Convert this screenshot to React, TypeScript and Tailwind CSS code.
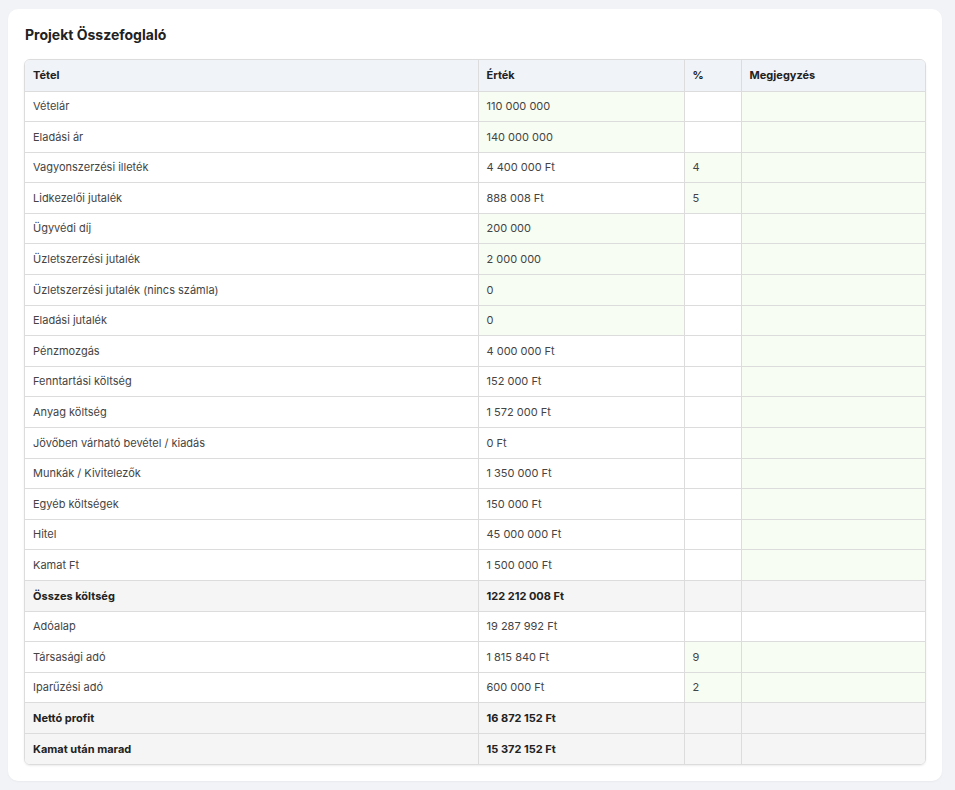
const rows: [string, string, string, boolean, boolean, boolean, boolean][] = [
  // label, value, pct, valGreen, pctGreen, noteGreen, bold
  ["Vételár", "110 000 000", "", true, false, true, false],
  ["Eladási ár", "140 000 000", "", true, false, true, false],
  ["Vagyonszerzési illeték", "4 400 000 Ft", "4", false, true, true, false],
  ["Lidkezelői jutalék", "888 008 Ft", "5", false, true, true, false],
  ["Ügyvédi díj", "200 000", "", true, false, true, false],
  ["Üzletszerzési jutalék", "2 000 000", "", true, false, true, false],
  ["Üzletszerzési jutalék (nincs számla)", "0", "", true, false, true, false],
  ["Eladási jutalék", "0", "", true, false, true, false],
  ["Pénzmozgás", "4 000 000 Ft", "", false, false, true, false],
  ["Fenntartási költség", "152 000 Ft", "", false, false, true, false],
  ["Anyag költség", "1 572 000 Ft", "", false, false, true, false],
  ["Jövőben várható bevétel / kiadás", "0 Ft", "", false, false, true, false],
  ["Munkák / Kivitelezők", "1 350 000 Ft", "", false, false, true, false],
  ["Egyéb költségek", "150 000 Ft", "", false, false, true, false],
  ["Hitel", "45 000 000 Ft", "", false, false, true, false],
  ["Kamat Ft", "1 500 000 Ft", "", false, false, true, false],
  ["Összes költség", "122 212 008 Ft", "", false, false, false, true],
  ["Adóalap", "19 287 992 Ft", "", false, false, false, false],
  ["Társasági adó", "1 815 840 Ft", "9", false, true, true, false],
  ["Iparűzési adó", "600 000 Ft", "2", false, true, true, false],
  ["Nettó profit", "16 872 152 Ft", "", false, false, false, true],
  ["Kamat után marad", "15 372 152 Ft", "", false, false, false, true],
];

export default function App() {
  return (
    <div className="min-h-[790px] bg-[#f1f3f7] pt-[9px] pl-[8px] pr-[13px] pb-[9px]" style={{ fontFamily: "Inter, 'Noto Sans', sans-serif" }}>
      <div className="bg-white rounded-[10px] px-[16px] pt-[17px] pb-[16px] shadow-[0_1px_2px_rgba(0,0,0,0.04)]">
        <h2 className="text-[14px] font-bold text-[#222] leading-[18px] mb-[15px] pl-px">Projekt Összefoglaló</h2>
        <div className="border border-[#dcdcdc] rounded-[6px] overflow-hidden shadow-[0_1px_2px_rgba(0,0,0,0.08)]">
          <table className="w-full border-collapse text-[11px] text-[#444] table-fixed">
            <colgroup>
              <col className="w-[453px]" />
              <col className="w-[206px]" />
              <col className="w-[57px]" />
              <col />
            </colgroup>
            <thead>
              <tr className="bg-[#f0f3f8] h-[31px] text-[#222] font-bold text-left">
                <th className="px-[8px] border-r border-[#dcdcdc]">Tétel</th>
                <th className="px-[8px] border-r border-[#dcdcdc]">Érték</th>
                <th className="px-[8px] border-r border-[#dcdcdc]">%</th>
                <th className="px-[8px]">Megjegyzés</th>
              </tr>
            </thead>
            <tbody>
              {rows.map(([l, v, p, vg, pg, ng, b]) => (
                <tr key={l} className={`h-[30.6px] border-t border-[#dcdcdc] ${b ? "bg-[#f5f5f5] font-bold text-[#222]" : ""}`}>
                  <td className="px-[8px] border-r border-[#dcdcdc]">{l}</td>
                  <td className={`px-[8px] border-r border-[#dcdcdc] ${vg ? "bg-[#f8fdf3]" : ""}`}>{v}</td>
                  <td className={`px-[8px] border-r border-[#dcdcdc] ${pg ? "bg-[#f8fdf3]" : ""}`}>{p}</td>
                  <td className={`px-[8px] ${ng ? "bg-[#f8fdf3]" : ""}`}></td>
                </tr>
              ))}
            </tbody>
          </table>
        </div>
      </div>
    </div>
  );
}
